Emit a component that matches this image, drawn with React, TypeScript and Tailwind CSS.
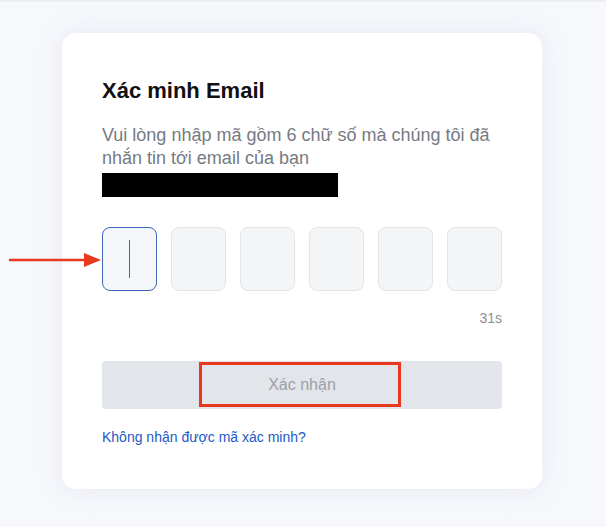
import React from "react";

export default function App() {
  return (
    <div className="relative min-h-[527px] w-[606px] bg-[#f7f8fc] border-t-2 border-[#eceef3]" style={{ fontFamily: '"Liberation Sans", Arial, sans-serif' }}>
      <div className="pt-[31px] pl-[62px]">
        <div className="w-[480px] rounded-[14px] bg-white px-[40px] pt-[44px] pb-[44px] shadow-[0_0_24px_rgba(200,205,225,0.35)]">
          <h1 className="text-[22px] font-bold leading-[28px] text-[#111]">Xác minh Email</h1>
          <p className="mt-[19px] text-[18px] leading-[23px] text-[#767a83]">
            Vui lòng nhập mã gồm 6 chữ số mà chúng tôi đã nhắn tin tới email của bạn
          </p>
          <div className="mt-[3px] h-[24px] w-[236px] bg-black" />
          <div className="relative mt-[30px] flex gap-[14px]">
            <div className="relative flex h-[64px] w-[55px] items-center justify-center rounded-[8px] border border-[#3f68b8] bg-[#f4f6fa]">
              <div className="h-[38px] w-px bg-[#3f68b8]" />
            </div>
            {[0, 1, 2, 3, 4].map((i) => (
              <div key={i} className="h-[64px] w-[55px] rounded-[8px] border border-[#e2e4e8] bg-[#f4f5f7]" />
            ))}
            <svg className="absolute left-[-94px] top-[24px]" width="94" height="18" viewBox="0 0 94 18">
              <line x1="2" y1="9" x2="80" y2="9" stroke="#e8391f" strokeWidth="2.5" strokeLinecap="round" />
              <polygon points="76,2 93,9 76,16" fill="#e8391f" />
            </svg>
          </div>
          <div className="mt-[19px] text-right text-[14px] leading-[16px] text-[#8a8e96]">31s</div>
          <div className="relative mt-[35px] flex h-[48px] items-center justify-center rounded-[4px] bg-[#e2e5ea] text-[16px] text-[#9ca0a8]">
            Xác nhận
            <div className="absolute left-[97px] top-[1px] h-[45px] w-[202px] border-[3px] border-[#e8391f]" />
          </div>
          <div className="mt-[20px] text-[14px] leading-[16px] text-[#2259c7]">Không nhận được mã xác minh?</div>
        </div>
      </div>
    </div>
  );
}
